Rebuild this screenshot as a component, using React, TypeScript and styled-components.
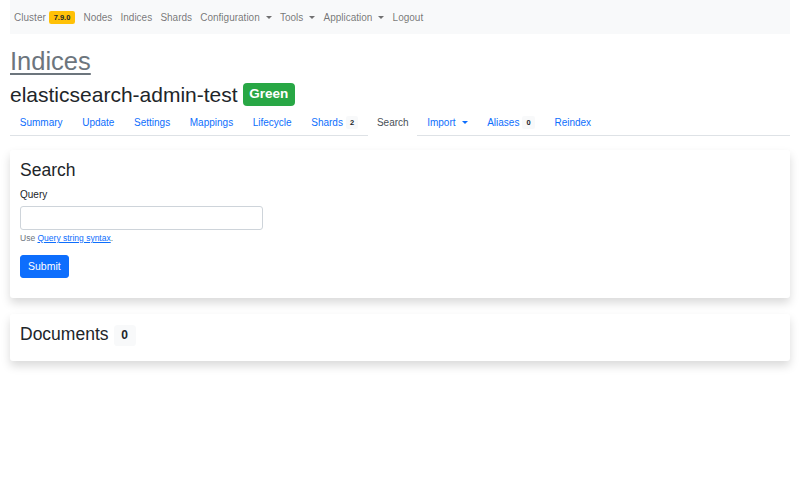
import styled, { createGlobalStyle } from 'styled-components'

const GlobalStyle = createGlobalStyle`
  body {
    margin: 0;
    background: #fff;
    font-family: "Liberation Sans", Arial, sans-serif;
    font-size: 10px;
    line-height: 1.5;
    color: #212529;
  }
  * { box-sizing: border-box; }
`

const Page = styled.div`
  padding: 0 10px;
`

const Navbar = styled.nav`
  display: flex;
  align-items: center;
  height: 34px;
  padding-top: 1px;
  background: #f8f9fa;
`

const NavLink = styled.a`
  display: flex;
  align-items: center;
  gap: 3px;
  padding: 5px 4.1px;
  color: rgba(0, 0, 0, 0.55);
  text-decoration: none;
`

const Caret = styled.span`
  display: inline-block;
  margin-left: 3px;
  border-top: 3.5px solid currentColor;
  border-left: 3.5px solid transparent;
  border-right: 3.5px solid transparent;
`

const Badge = styled.span<{ $bg: string; $color?: string; $size?: string; $padX?: string }>`
  display: inline-block;
  background: ${(p) => p.$bg};
  color: ${(p) => p.$color || '#fff'};
  font-size: ${(p) => p.$size || '7.5px'};
  font-weight: 700;
  line-height: 1;
  padding: 0.35em ${(p) => p.$padX || '0.65em'};
  border-radius: 0.3em;
`

const Title = styled.h1`
  margin: 12px 0 0;
  font-size: 25.5px;
  font-weight: 500;
  line-height: 1.2;
  a {
    color: #6c757d;
    text-decoration: underline;
    text-decoration-thickness: 1.5px;
    text-underline-offset: 3px;
  }
`

const IndexName = styled.h2`
  display: flex;
  align-items: center;
  gap: 5px;
  margin: 5px 0 3px;
  font-size: 21px;
  font-weight: 500;
  line-height: 1.2;
`

const Tabs = styled.ul`
  display: flex;
  list-style: none;
  margin: 0 0 14px;
  padding: 0;
  border-bottom: 1px solid #dee2e6;
`

const Tab = styled.li<{ $active?: boolean }>`
  margin-bottom: -1px;
  a {
    display: flex;
    align-items: center;
    gap: 3px;
    height: 26px;
    padding: 0 8.8px;
    border: 1px solid ${(p) => (p.$active ? '#dee2e6 #dee2e6 #fff' : 'transparent')};
    border-radius: 4px 4px 0 0;
    background: ${(p) => (p.$active ? '#fff' : 'transparent')};
    color: ${(p) => (p.$active ? '#495057' : '#0d6efd')};
    text-decoration: none;
  }
`

const Card = styled.section`
  background: #fff;
  border-radius: 3px;
  box-shadow: 0 5px 10px rgba(0, 0, 0, 0.15);
  padding: 10px;
  margin-bottom: 16px;
`

const CardTitle = styled.h3`
  display: flex;
  align-items: center;
  gap: 5px;
  margin: 0 0 5px;
  font-size: 17.5px;
  font-weight: 500;
  line-height: 1.25;
`

const Label = styled.label`
  display: block;
  margin-bottom: 4px;
`

const Input = styled.input`
  display: block;
  width: 243px;
  height: 24px;
  border: 1px solid #ced4da;
  border-radius: 3px;
  font: inherit;
  padding: 0 8px;
`

const Help = styled.div`
  margin-top: 2px;
  font-size: 8.5px;
  color: #6c757d;
  a { color: #0d6efd; }
`

const Button = styled.button`
  margin-top: 11px;
  margin-bottom: 10px;
  height: 23px;
  padding: 0 7px;
  border: 1px solid #0d6efd;
  border-radius: 3px;
  background: #0d6efd;
  color: #fff;
  font: inherit;
  font-size: 10.5px;
`

const tabs: { label: string; count?: number; dropdown?: boolean; active?: boolean }[] = [
  { label: 'Summary' },
  { label: 'Update' },
  { label: 'Settings' },
  { label: 'Mappings' },
  { label: 'Lifecycle' },
  { label: 'Shards', count: 2 },
  { label: 'Search', active: true },
  { label: 'Import', dropdown: true },
  { label: 'Aliases', count: 0 },
  { label: 'Reindex' },
]

export default function App() {
  return (
    <>
      <GlobalStyle />
      <Page>
        <Navbar>
          <NavLink href='#'>
            Cluster <Badge $bg='#ffc107' $color='#212529'>7.9.0</Badge>
          </NavLink>
          <NavLink href='#'>Nodes</NavLink>
          <NavLink href='#'>Indices</NavLink>
          <NavLink href='#'>Shards</NavLink>
          <NavLink href='#'>
            Configuration<Caret />
          </NavLink>
          <NavLink href='#'>
            Tools<Caret />
          </NavLink>
          <NavLink href='#'>
            Application<Caret />
          </NavLink>
          <NavLink href='#'>Logout</NavLink>
        </Navbar>

        <Title>
          <a href='#'>Indices</a>
        </Title>
        <IndexName>
          elasticsearch-admin-test{' '}
          <Badge $bg='#28a745' $size='13.5px' $padX='0.5em'>
            Green
          </Badge>
        </IndexName>

        <Tabs>
          {tabs.map((t) => (
            <Tab key={t.label} $active={t.active}>
              <a href='#'>
                {t.label}
                {t.count !== undefined && (
                  <Badge $bg='#f8f9fa' $color='#212529' $padX='0.55em'>
                    {t.count}
                  </Badge>
                )}
                {t.dropdown && <Caret />}
              </a>
            </Tab>
          ))}
        </Tabs>

        <Card>
          <CardTitle>Search</CardTitle>
          <Label>Query</Label>
          <Input type='text' />
          <Help>
            Use <a href='#'>Query string syntax</a>.
          </Help>
          <Button>Submit</Button>
        </Card>

        <Card>
          <CardTitle>
            Documents{' '}
            <Badge $bg='#f8f9fa' $color='#212529' $size='12px'>
              0
            </Badge>
          </CardTitle>
        </Card>
      </Page>
    </>
  )
}
